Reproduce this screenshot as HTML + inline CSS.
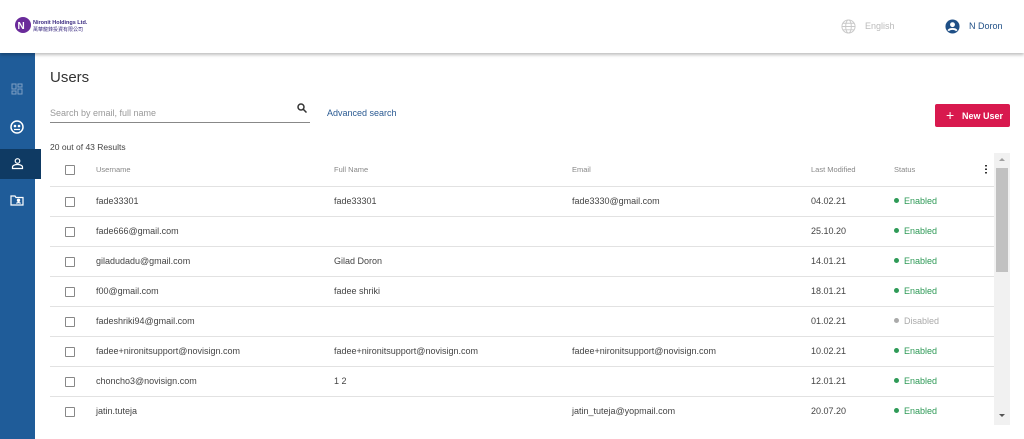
<!DOCTYPE html>
<html><head><meta charset="utf-8"><style>
*{box-sizing:border-box;margin:0;padding:0}
body{width:1024px;height:439px;overflow:hidden;background:#fff;font-family:"Liberation Sans",Arial,sans-serif;position:relative;color:#444}
.hdr{position:absolute;left:0;top:0;width:1024px;height:53px;background:#fff;box-shadow:0 2px 3px rgba(0,0,0,.25);z-index:2}
.side{position:absolute;left:0;top:53px;width:35px;height:386px;background:#1f5c99}
.act{position:absolute;left:0;top:149px;width:41px;height:30px;background:#0f3a63;z-index:3}
.t{position:absolute;white-space:nowrap}
.cb{position:absolute;left:65px;width:10px;height:10px;border:1px solid #888;border-radius:1px;background:#fff}
.line{position:absolute;left:50px;width:945px;height:1px;background:#e2e2e2}
.c{position:absolute;font-size:9px;color:#444;white-space:nowrap}
.h{font-size:7.5px;color:#888}
.dot{display:inline-block;width:5px;height:5px;border-radius:50%;background:#2e9a57;margin-right:5px;vertical-align:1px}
.en{color:#2e9a57}
</style></head><body>
<div class="hdr">
 <svg style="position:absolute;left:14px;top:15px" width="80" height="22" viewBox="0 0 80 22">
  <circle cx="9" cy="10" r="8" fill="#6a2b9a"/><text x="3.5" y="14" font-size="10" fill="#fff" font-family="Liberation Sans" font-weight="bold">N</text>
  <text x="19" y="9" font-size="5.5" fill="#3a2a80" font-weight="bold" font-family="Liberation Sans">Nironit Holdings Ltd.</text>
  <text x="19" y="16" font-size="5" fill="#3a2a80" font-family="Noto Sans CJK TC,sans-serif">萬華龍鋒投資有限公司</text>
 </svg>
 <svg style="position:absolute;left:841px;top:19px" width="15" height="15" viewBox="0 0 16 16" fill="none" stroke="#c8c8c8" stroke-width="1"><circle cx="8" cy="8" r="7"/><ellipse cx="8" cy="8" rx="3" ry="7"/><path d="M1 8h14M2 4.5h12M2 11.5h12"/></svg>
 <div class="t" style="left:865px;top:21px;font-size:9px;color:#bbb">English</div>
 <svg style="position:absolute;left:945px;top:19px" width="15" height="15" viewBox="0 0 16 16"><circle cx="8" cy="8" r="7.5" fill="#1f4f86"/><circle cx="8" cy="6" r="2.6" fill="#fff"/><path d="M3.5 12.5c1.5-2.5 7.5-2.5 9 0" stroke="#fff" stroke-width="2" fill="none"/></svg>
 <div class="t" style="left:969px;top:21px;font-size:9px;color:#1f4f86">N Doron</div>
</div>
<div class="side"></div>
<div class="act"></div>
<svg style="position:absolute;left:11px;top:83px" width="13" height="13" viewBox="0 0 13 13" fill="none" stroke="#7f9fc4" stroke-width="1"><rect x="1" y="1" width="4" height="5"/><rect x="7" y="1" width="4" height="3"/><rect x="1" y="8" width="4" height="3"/><rect x="7" y="6" width="4" height="5"/></svg>
<svg style="position:absolute;left:10px;top:120px" width="14" height="14" viewBox="0 0 14 14"><circle cx="7" cy="7" r="6" fill="none" stroke="#fff" stroke-width="1.5"/><circle cx="5" cy="6" r="1.3" fill="#fff"/><circle cx="9" cy="6" r="1.3" fill="#fff"/><path d="M4 9.5h6" stroke="#fff" stroke-width="1.2"/></svg>
<svg style="position:absolute;left:11px;top:157px;z-index:4" width="13" height="13" viewBox="0 0 13 13" fill="none" stroke="#fff" stroke-width="1.2"><circle cx="6.5" cy="4" r="2.3"/><path d="M1.5 11.5v-1.5c0-1.5 2.5-2.5 5-2.5s5 1 5 2.5v1.5z"/></svg>
<svg style="position:absolute;left:10px;top:194px" width="14" height="13" viewBox="0 0 14 13" fill="none" stroke="#fff" stroke-width="1.2"><path d="M1 2h4l1 1.5h7V11H1z"/><circle cx="8.5" cy="6.3" r="1.1" fill="#fff"/><path d="M6.5 9.5c.5-1.2 3.5-1.2 4 0"/></svg>

<div class="t" style="left:50px;top:69px;font-size:15px;color:#333">Users</div>
<div class="t" style="left:50px;top:108px;font-size:9px;color:#999">Search by email, full name</div>
<div style="position:absolute;left:50px;top:122px;width:260px;height:1px;background:#888"></div>
<svg style="position:absolute;left:297px;top:103px" width="10" height="10" viewBox="0 0 10 10" fill="none" stroke="#333" stroke-width="1.5"><circle cx="4" cy="4" r="3"/><path d="M6.2 6.2L9.5 9.5"/></svg>
<div class="t" style="left:327px;top:108px;font-size:9px;color:#2a5a92">Advanced search</div>
<div style="position:absolute;left:935px;top:104px;width:75px;height:23px;background:#d8194e;border-radius:2px"></div>
<div class="t" style="left:946px;top:107px;font-size:14px;color:#fff">+</div>
<div class="t" style="left:962px;top:111px;font-size:9px;color:#fff;font-weight:bold">New User</div>
<div class="t" style="left:50px;top:142px;font-size:8.5px;color:#444">20 out of 43 Results</div>

<div class="cb" style="top:165px"></div>
<div class="c h" style="left:96px;top:165px">Username</div>
<div class="c h" style="left:334px;top:165px">Full Name</div>
<div class="c h" style="left:572px;top:165px">Email</div>
<div class="c h" style="left:811px;top:165px">Last Modified</div>
<div class="c h" style="left:894px;top:165px">Status</div>
<div style="position:absolute;left:985px;top:164px;width:2px;height:10px;background:radial-gradient(circle,#333 0.9px,transparent 1px) 0 0/2px 3.5px"></div>
<div class="line" style="top:186px"></div>

<div id="rows"></div>
<script>
var d=[["fade33301","fade33301","fade3330@gmail.com","04.02.21",1],["fade666@gmail.com","","","25.10.20",1],["giladudadu@gmail.com","Gilad Doron","","14.01.21",1],["f00@gmail.com","fadee shriki","","18.01.21",1],["fadeshriki94@gmail.com","","","01.02.21",0],["fadee+nironitsupport@novisign.com","fadee+nironitsupport@novisign.com","fadee+nironitsupport@novisign.com","10.02.21",1],["choncho3@novisign.com","1 2","","12.01.21",1],["jatin.tuteja","","jatin_tuteja@yopmail.com","20.07.20",1]];
var h="";d.forEach(function(r,i){var y=186+i*30;
h+='<div class="cb" style="top:'+(y+11)+'px"></div>';
h+='<div class="c" style="left:96px;top:'+(y+10)+'px">'+r[0]+'</div>';
h+='<div class="c" style="left:334px;top:'+(y+10)+'px">'+r[1]+'</div>';
h+='<div class="c" style="left:572px;top:'+(y+10)+'px">'+r[2]+'</div>';
h+='<div class="c" style="left:811px;top:'+(y+10)+'px">'+r[3]+'</div>';
h+=r[4]?'<div class="c en" style="left:894px;top:'+(y+10)+'px"><span class="dot"></span>Enabled</div>':'<div class="c" style="left:894px;top:'+(y+10)+'px;color:#aaa"><span class="dot" style="background:#aaa"></span>Disabled</div>';
if(i<7)h+='<div class="line" style="top:'+(y+30)+'px"></div>';});
document.getElementById("rows").innerHTML=h;
</script>
<div style="position:absolute;left:994px;top:153px;width:16px;height:272px;background:#f1f1f1"></div>
<div style="position:absolute;left:996px;top:168px;width:12px;height:104px;background:#c1c1c1"></div>
<div style="position:absolute;left:999px;top:158px;border:3px solid transparent;border-bottom:3px solid #a0a0a0;border-top:0"></div>
<div style="position:absolute;left:999px;top:414px;border:3px solid transparent;border-top:3px solid #555;border-bottom:0"></div>
</body></html>
